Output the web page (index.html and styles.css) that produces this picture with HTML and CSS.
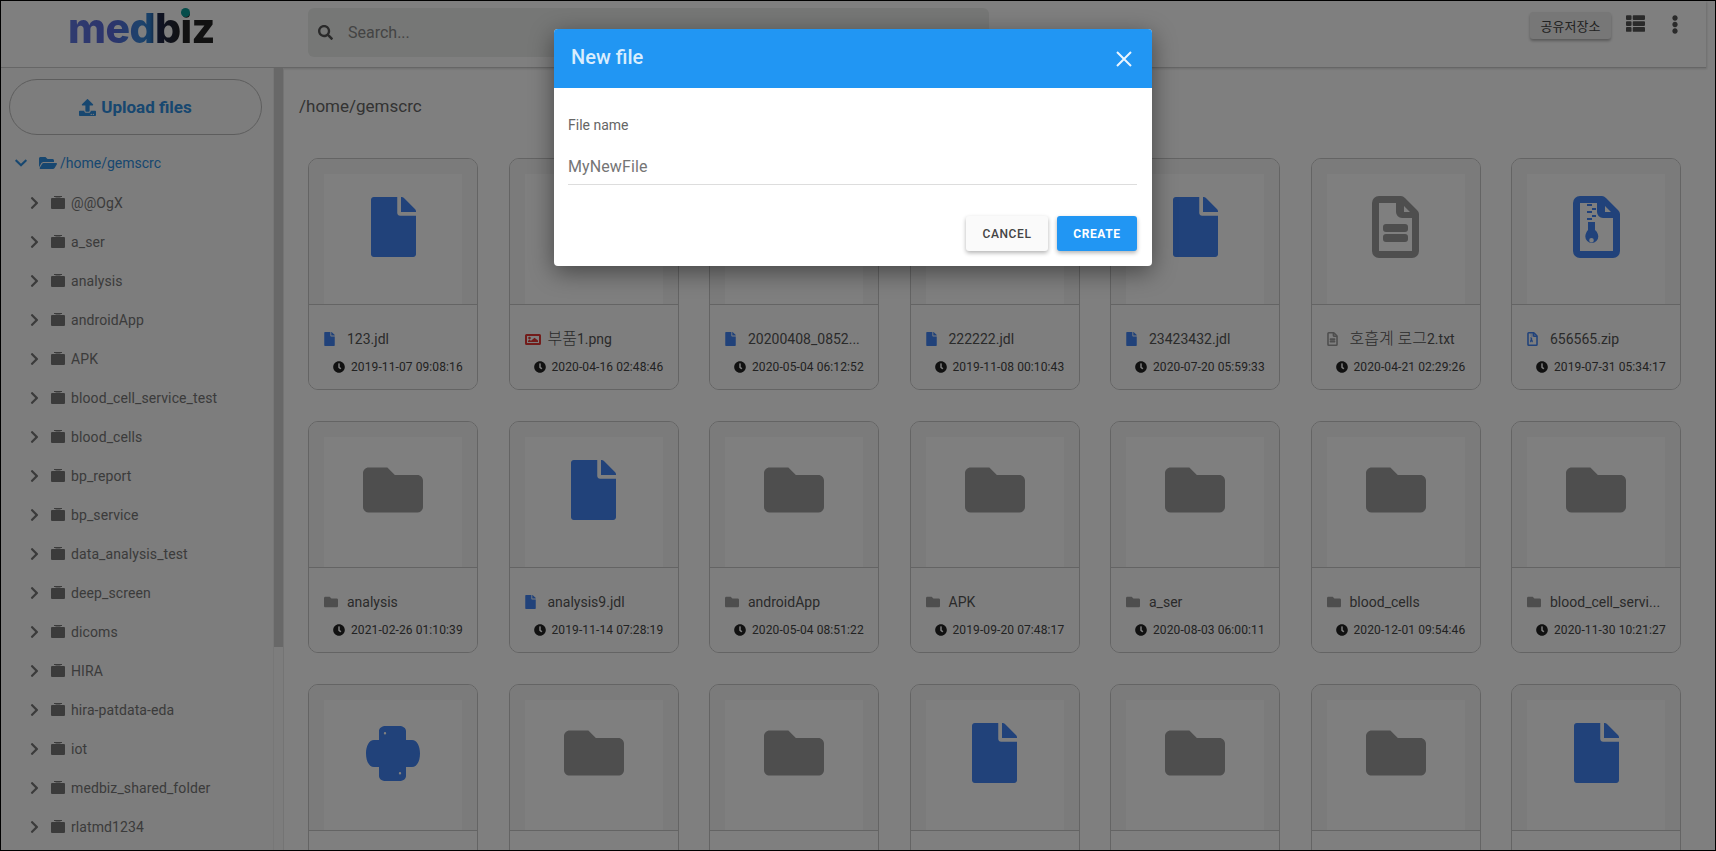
FILE: index.html

```html
<!DOCTYPE html>
<html>

<head>
    <title>medbiz - File manager</title>
    <link rel="stylesheet" href="styles.css">
</head>

<body>
    <!-- Icon sprites -->
    <svg class="sprites" xmlns="http://www.w3.org/2000/svg">
        <symbol id="i-file" viewBox="0 0 384 512"><path d="M224 136V0H24C10.7 0 0 10.7 0 24v464c0 13.3 10.7 24 24 24h336c13.3 0 24-10.7 24-24V160H248c-13.2 0-24-10.8-24-24zm160-14.1v6.1H256V0h6.1c6.4 0 12.5 2.5 17 7l97.9 98c4.5 4.5 7 10.6 7 16.9z"/></symbol>
        <symbol id="i-folder" viewBox="0 0 512 512"><path d="M464 128H272l-64-64H48C21.49 64 0 85.49 0 112v288c0 26.51 21.49 48 48 48h416c26.51 0 48-21.49 48-48V176c0-26.51-21.49-48-48-48z"/></symbol>
        <symbol id="i-folder-open" viewBox="0 0 576 512"><path d="M572.694 292.093L500.27 416.248A63.997 63.997 0 0 1 444.989 448H45.025c-18.523 0-30.064-20.093-20.731-36.093l72.424-124.155A64 64 0 0 1 152 256h399.964c18.523 0 30.064 20.093 20.73 36.093zM152 224h328v-48c0-26.51-21.49-48-48-48H272l-64-64H48C21.49 64 0 85.49 0 112v278.046l69.077-118.418C86.214 242.25 117.989 224 152 224z"/></symbol>
        <symbol id="i-tree-folder" viewBox="0 0 14 13"><path d="M3 0h8v1H3zM1 2h3l1-.5h4L10 2h3a1 1 0 0 1 1 1v9a1 1 0 0 1-1 1H1a1 1 0 0 1-1-1V3a1 1 0 0 1 1-1z"/></symbol>
        <symbol id="i-right" viewBox="0 0 320 512"><path d="M285.476 272.971L91.132 467.314c-9.373 9.373-24.569 9.373-33.941 0l-22.667-22.667c-9.357-9.357-9.375-24.522-.04-33.901L188.505 256 34.484 101.255c-9.335-9.379-9.317-24.544.04-33.901l22.667-22.667c9.373-9.373 24.569-9.373 33.941 0L285.475 239.03c9.373 9.372 9.373 24.568.001 33.941z"/></symbol>
        <symbol id="i-down" viewBox="0 0 448 512"><path d="M207.029 381.476L12.686 187.132c-9.373-9.373-9.373-24.569 0-33.941l22.667-22.667c9.357-9.357 24.522-9.375 33.901-.04L224 284.505l154.745-154.021c9.379-9.335 24.544-9.317 33.901.04l22.667 22.667c9.373 9.373 9.373 24.569 0 33.941L240.971 381.476c-9.373 9.372-24.569 9.372-33.942 0z"/></symbol>
        <symbol id="i-search" viewBox="0 0 512 512"><path d="M505 442.7L405.3 343c-4.5-4.5-10.6-7-17-7H372c27.6-35.3 44-79.7 44-128C416 93.1 322.9 0 208 0S0 93.1 0 208s93.1 208 208 208c48.3 0 92.7-16.4 128-44v16.3c0 6.4 2.5 12.5 7 17l99.7 99.7c9.4 9.4 24.6 9.4 33.9 0l28.3-28.3c9.4-9.4 9.4-24.6.1-34zM208 336c-70.7 0-128-57.2-128-128 0-70.7 57.2-128 128-128 70.7 0 128 57.2 128 128 0 70.7-57.2 128-128 128z"/></symbol>
        <symbol id="i-clock" viewBox="0 0 512 512"><path d="M256,8C119,8,8,119,8,256S119,504,256,504,504,393,504,256,393,8,256,8Zm92.49,313h0l-20,25a16,16,0,0,1-22.49,2.5h0l-67-49.72a40,40,0,0,1-15-31.23V112a16,16,0,0,1,16-16h32a16,16,0,0,1,16,16V256l58,42.5A16,16,0,0,1,348.49,321Z"/></symbol>
        <symbol id="i-dots" viewBox="0 0 192 512"><path d="M96 184c39.8 0 72 32.2 72 72s-32.2 72-72 72-72-32.2-72-72 32.2-72 72-72zM24 80c0 39.8 32.2 72 72 72s72-32.2 72-72S135.8 8 96 8 24 40.2 24 80zm0 352c0 39.8 32.2 72 72 72s72-32.2 72-72-32.2-72-72-72-72 32.2-72 72z"/></symbol>
        <symbol id="i-list" viewBox="0 0 512 512"><path d="M149.333 216v80c0 13.255-10.745 24-24 24H24c-13.255 0-24-10.745-24-24v-80c0-13.255 10.745-24 24-24h101.333c13.255 0 24 10.745 24 24zM0 376v80c0 13.255 10.745 24 24 24h101.333c13.255 0 24-10.745 24-24v-80c0-13.255-10.745-24-24-24H24c-13.255 0-24 10.745-24 24zM125.333 32H24C10.745 32 0 42.745 0 56v80c0 13.255 10.745 24 24 24h101.333c13.255 0 24-10.745 24-24V56c0-13.255-10.745-24-24-24zm80 448H488c13.255 0 24-10.745 24-24v-80c0-13.255-10.745-24-24-24H205.333c-13.255 0-24 10.745-24 24v80c0 13.255 10.745 24 24 24zm-24-424v80c0 13.255 10.745 24 24 24H488c13.255 0 24-10.745 24-24V56c0-13.255-10.745-24-24-24H205.333c-13.255 0-24 10.745-24 24zm24 264H488c13.255 0 24-10.745 24-24v-80c0-13.255-10.745-24-24-24H205.333c-13.255 0-24 10.745-24 24v80c0 13.255 10.745 24 24 24z"/></symbol>
        <symbol id="i-upload" viewBox="0 0 512 512"><path d="M296 384h-80c-13.3 0-24-10.7-24-24V192h-87.7c-17.8 0-26.7-21.5-14.1-34.1L242.3 5.7c7.5-7.5 19.8-7.5 27.3 0l152.2 152.2c12.6 12.6 3.7 34.1-14.1 34.1H320v168c0 13.3-10.7 24-24 24zm216-8v112c0 13.3-10.7 24-24 24H24c-13.3 0-24-10.7-24-24V376c0-13.3 10.7-24 24-24h136v8c0 30.9 25.1 56 56 56h80c30.9 0 56-25.1 56-56v-8h136c13.3 0 24 10.7 24 24zm-124 88c0-11-9-20-20-20s-20 9-20 20 9 20 20 20 20-9 20-20zm64 0c0-11-9-20-20-20s-20 9-20 20 9 20 20 20 20-9 20-20z"/></symbol>
        <symbol id="i-python" viewBox="0 0 54 55"><path fill-rule="evenodd" d="M20 0h13c4 0 7 2 7 5v9h6c5 0 8 6 8 13.500S51 41 46 41h-6v9c0 3-3 5-7 5H20c-4 0-7-2-7-5v-9H8c-5 0-8-6-8-13.500S3 14 8 14h5V5c0-3 3-5 7-5zm-1 6a1.200 1.200 0 1 0 0 2.400 1.200 1.200 0 0 0 0-2.400zm15 40a1.200 1.200 0 1 0 0 2.400 1.200 1.200 0 0 0 0-2.400z"/></symbol>
        <symbol id="i-text" viewBox="0 0 47 62"><path fill-rule="evenodd" d="M7 0h22q2 0 4 2l12 12q2 2 2 4v37a7 7 0 0 1-7 7H7a7 7 0 0 1-7-7V7a7 7 0 0 1 7-7zm0 7v48h33V22H30a6 6 0 0 1-6-6V7zm25 3v6h6zM14 28h19a3 3 0 0 1 3 3v2a3 3 0 0 1-3 3H14a3 3 0 0 1-3-3v-2a3 3 0 0 1 3-3zm0 10h19a3 3 0 0 1 3 3v2a3 3 0 0 1-3 3H14a3 3 0 0 1-3-3v-2a3 3 0 0 1 3-3z"/></symbol>
        <symbol id="i-zip" viewBox="0 0 47 62"><path fill-rule="evenodd" d="M7 0h22q2 0 4 2l12 12q2 2 2 4v37a7 7 0 0 1-7 7H7a7 7 0 0 1-7-7V7a7 7 0 0 1 7-7zm0 7v48h33V22H30a6 6 0 0 1-6-6V7zm25 3v6h6z"/><path d="M14 8h5v2h-5zM19 12h4v2h-4zM14 15h5v2h-5zM19 19h4v2h-4zM14 22h5v2h-5zM15 26h7v8c2 1.500 3.300 4 3.300 6.500a6.500 6.500 0 0 1-13 0c0-2.500 1.300-5 2.700-6.500zm3.500 16a2.300 2.300 0 1 0 0 4.600 2.300 2.300 0 0 0 0-4.600z" fill-rule="evenodd"/></symbol>
        <symbol id="i-image" viewBox="0 0 16 11"><path fill-rule="evenodd" d="M1.500 0h13A1.500 1.500 0 0 1 16 1.500v8a1.500 1.500 0 0 1-1.500 1.500h-13A1.500 1.500 0 0 1 0 9.500v-8A1.500 1.500 0 0 1 1.500 0zm.5 2v7h12V2zm2.500.8a1.300 1.300 0 1 1 0 2.600 1.300 1.300 0 0 1 0-2.600zM3 8V6.800l1.500-1L6 6.800l3.500-3L13 6.500V8z"/></symbol>
    </svg>

    <div class="page">
        <!-- Top bar -->
        <header class="topbar">
            <div class="logo-box">
                <div class="logo">medbiz<span class="logo-dot"></span></div>
            </div>
            <div class="search">
                <svg class="search-icon"><use href="#i-search"></use></svg>
                <input class="search-input" type="text" placeholder="Search...">
            </div>
            <div class="top-actions">
                <button class="storage-btn" type="button">공유저장소</button>
                <svg class="top-icon list-icon"><use href="#i-list"></use></svg>
                <svg class="top-icon dots-icon"><use href="#i-dots"></use></svg>
            </div>
        </header>

        <div class="content">
            <!-- Folder tree -->
            <aside class="sidebar">
                <div class="sidebar-inner">
                    <button class="upload-btn" type="button">
                        <svg class="upload-icon"><use href="#i-upload"></use></svg>Upload files
                    </button>
                    <div class="tree-root">
                        <svg class="root-chevron"><use href="#i-down"></use></svg>
                        <svg class="root-folder"><use href="#i-folder-open"></use></svg>
                        <span>/home/gemscrc</span>
                    </div>
                    <div class="tree-row"><svg class="chevron"><use href="#i-right"></use></svg><svg class="tree-folder"><use href="#i-tree-folder"></use></svg><span>@@OgX</span></div>
                    <div class="tree-row"><svg class="chevron"><use href="#i-right"></use></svg><svg class="tree-folder"><use href="#i-tree-folder"></use></svg><span>a_ser</span></div>
                    <div class="tree-row"><svg class="chevron"><use href="#i-right"></use></svg><svg class="tree-folder"><use href="#i-tree-folder"></use></svg><span>analysis</span></div>
                    <div class="tree-row"><svg class="chevron"><use href="#i-right"></use></svg><svg class="tree-folder"><use href="#i-tree-folder"></use></svg><span>androidApp</span></div>
                    <div class="tree-row"><svg class="chevron"><use href="#i-right"></use></svg><svg class="tree-folder"><use href="#i-tree-folder"></use></svg><span>APK</span></div>
                    <div class="tree-row"><svg class="chevron"><use href="#i-right"></use></svg><svg class="tree-folder"><use href="#i-tree-folder"></use></svg><span>blood_cell_service_test</span></div>
                    <div class="tree-row"><svg class="chevron"><use href="#i-right"></use></svg><svg class="tree-folder"><use href="#i-tree-folder"></use></svg><span>blood_cells</span></div>
                    <div class="tree-row"><svg class="chevron"><use href="#i-right"></use></svg><svg class="tree-folder"><use href="#i-tree-folder"></use></svg><span>bp_report</span></div>
                    <div class="tree-row"><svg class="chevron"><use href="#i-right"></use></svg><svg class="tree-folder"><use href="#i-tree-folder"></use></svg><span>bp_service</span></div>
                    <div class="tree-row"><svg class="chevron"><use href="#i-right"></use></svg><svg class="tree-folder"><use href="#i-tree-folder"></use></svg><span>data_analysis_test</span></div>
                    <div class="tree-row"><svg class="chevron"><use href="#i-right"></use></svg><svg class="tree-folder"><use href="#i-tree-folder"></use></svg><span>deep_screen</span></div>
                    <div class="tree-row"><svg class="chevron"><use href="#i-right"></use></svg><svg class="tree-folder"><use href="#i-tree-folder"></use></svg><span>dicoms</span></div>
                    <div class="tree-row"><svg class="chevron"><use href="#i-right"></use></svg><svg class="tree-folder"><use href="#i-tree-folder"></use></svg><span>HIRA</span></div>
                    <div class="tree-row"><svg class="chevron"><use href="#i-right"></use></svg><svg class="tree-folder"><use href="#i-tree-folder"></use></svg><span>hira-patdata-eda</span></div>
                    <div class="tree-row"><svg class="chevron"><use href="#i-right"></use></svg><svg class="tree-folder"><use href="#i-tree-folder"></use></svg><span>iot</span></div>
                    <div class="tree-row"><svg class="chevron"><use href="#i-right"></use></svg><svg class="tree-folder"><use href="#i-tree-folder"></use></svg><span>medbiz_shared_folder</span></div>
                    <div class="tree-row"><svg class="chevron"><use href="#i-right"></use></svg><svg class="tree-folder"><use href="#i-tree-folder"></use></svg><span>rlatmd1234</span></div>
                </div>
                <div class="scrollbar"><div class="scroll-thumb"></div></div>
            </aside>

            <!-- File grid -->
            <main class="main">
                <div class="path">/home/gemscrc</div>
                <div class="grid">
                    <div class="card">
                        <div class="thumb-wrap"><div class="thumb"><svg class="big blue file"><use href="#i-file"></use></svg></div></div>
                        <div class="caption">
                            <div class="name"><svg class="mini blue mini-file"><use href="#i-file"></use></svg><span>123.jdl</span></div>
                            <div class="date"><svg class="clock"><use href="#i-clock"></use></svg>2019-11-07 09:08:16</div>
                        </div>
                    </div>
                    <div class="card">
                        <div class="thumb-wrap"><div class="thumb"><svg class="big red pic"><use href="#i-image"></use></svg></div></div>
                        <div class="caption">
                            <div class="name"><svg class="mini red mini-image"><use href="#i-image"></use></svg><span><span class="cjk">부품</span>1.png</span></div>
                            <div class="date"><svg class="clock"><use href="#i-clock"></use></svg>2020-04-16 02:48:46</div>
                        </div>
                    </div>
                    <div class="card">
                        <div class="thumb-wrap"><div class="thumb"><svg class="big blue file"><use href="#i-file"></use></svg></div></div>
                        <div class="caption">
                            <div class="name"><svg class="mini blue mini-file"><use href="#i-file"></use></svg><span>20200408_0852...</span></div>
                            <div class="date"><svg class="clock"><use href="#i-clock"></use></svg>2020-05-04 06:12:52</div>
                        </div>
                    </div>
                    <div class="card">
                        <div class="thumb-wrap"><div class="thumb"><svg class="big blue file"><use href="#i-file"></use></svg></div></div>
                        <div class="caption">
                            <div class="name"><svg class="mini blue mini-file"><use href="#i-file"></use></svg><span>222222.jdl</span></div>
                            <div class="date"><svg class="clock"><use href="#i-clock"></use></svg>2019-11-08 00:10:43</div>
                        </div>
                    </div>
                    <div class="card">
                        <div class="thumb-wrap"><div class="thumb"><svg class="big blue file"><use href="#i-file"></use></svg></div></div>
                        <div class="caption">
                            <div class="name"><svg class="mini blue mini-file"><use href="#i-file"></use></svg><span>23423432.jdl</span></div>
                            <div class="date"><svg class="clock"><use href="#i-clock"></use></svg>2020-07-20 05:59:33</div>
                        </div>
                    </div>
                    <div class="card">
                        <div class="thumb-wrap"><div class="thumb"><svg class="big grey outline"><use href="#i-text"></use></svg></div></div>
                        <div class="caption">
                            <div class="name"><svg class="mini grey mini-file"><use href="#i-text"></use></svg><span><span class="cjk">호흡계 로그</span>2.txt</span></div>
                            <div class="date"><svg class="clock"><use href="#i-clock"></use></svg>2020-04-21 02:29:26</div>
                        </div>
                    </div>
                    <div class="card">
                        <div class="thumb-wrap"><div class="thumb"><svg class="big blue outline"><use href="#i-zip"></use></svg></div></div>
                        <div class="caption">
                            <div class="name"><svg class="mini blue mini-file"><use href="#i-zip"></use></svg><span>656565.zip</span></div>
                            <div class="date"><svg class="clock"><use href="#i-clock"></use></svg>2019-07-31 05:34:17</div>
                        </div>
                    </div>

                    <div class="card">
                        <div class="thumb-wrap"><div class="thumb"><svg class="big grey folder"><use href="#i-folder"></use></svg></div></div>
                        <div class="caption">
                            <div class="name"><svg class="mini grey mini-folder"><use href="#i-folder"></use></svg><span>analysis</span></div>
                            <div class="date"><svg class="clock"><use href="#i-clock"></use></svg>2021-02-26 01:10:39</div>
                        </div>
                    </div>
                    <div class="card">
                        <div class="thumb-wrap"><div class="thumb"><svg class="big blue file"><use href="#i-file"></use></svg></div></div>
                        <div class="caption">
                            <div class="name"><svg class="mini blue mini-file"><use href="#i-file"></use></svg><span>analysis9.jdl</span></div>
                            <div class="date"><svg class="clock"><use href="#i-clock"></use></svg>2019-11-14 07:28:19</div>
                        </div>
                    </div>
                    <div class="card">
                        <div class="thumb-wrap"><div class="thumb"><svg class="big grey folder"><use href="#i-folder"></use></svg></div></div>
                        <div class="caption">
                            <div class="name"><svg class="mini grey mini-folder"><use href="#i-folder"></use></svg><span>androidApp</span></div>
                            <div class="date"><svg class="clock"><use href="#i-clock"></use></svg>2020-05-04 08:51:22</div>
                        </div>
                    </div>
                    <div class="card">
                        <div class="thumb-wrap"><div class="thumb"><svg class="big grey folder"><use href="#i-folder"></use></svg></div></div>
                        <div class="caption">
                            <div class="name"><svg class="mini grey mini-folder"><use href="#i-folder"></use></svg><span>APK</span></div>
                            <div class="date"><svg class="clock"><use href="#i-clock"></use></svg>2019-09-20 07:48:17</div>
                        </div>
                    </div>
                    <div class="card">
                        <div class="thumb-wrap"><div class="thumb"><svg class="big grey folder"><use href="#i-folder"></use></svg></div></div>
                        <div class="caption">
                            <div class="name"><svg class="mini grey mini-folder"><use href="#i-folder"></use></svg><span>a_ser</span></div>
                            <div class="date"><svg class="clock"><use href="#i-clock"></use></svg>2020-08-03 06:00:11</div>
                        </div>
                    </div>
                    <div class="card">
                        <div class="thumb-wrap"><div class="thumb"><svg class="big grey folder"><use href="#i-folder"></use></svg></div></div>
                        <div class="caption">
                            <div class="name"><svg class="mini grey mini-folder"><use href="#i-folder"></use></svg><span>blood_cells</span></div>
                            <div class="date"><svg class="clock"><use href="#i-clock"></use></svg>2020-12-01 09:54:46</div>
                        </div>
                    </div>
                    <div class="card">
                        <div class="thumb-wrap"><div class="thumb"><svg class="big grey folder"><use href="#i-folder"></use></svg></div></div>
                        <div class="caption">
                            <div class="name"><svg class="mini grey mini-folder"><use href="#i-folder"></use></svg><span>blood_cell_servi...</span></div>
                            <div class="date"><svg class="clock"><use href="#i-clock"></use></svg>2020-11-30 10:21:27</div>
                        </div>
                    </div>

                    <!-- Third row is cut off by the window, only the thumbs show -->
                    <div class="card"><div class="thumb-wrap"><div class="thumb"><svg class="big blue python"><use href="#i-python"></use></svg></div></div></div>
                    <div class="card"><div class="thumb-wrap"><div class="thumb"><svg class="big grey folder"><use href="#i-folder"></use></svg></div></div></div>
                    <div class="card"><div class="thumb-wrap"><div class="thumb"><svg class="big grey folder"><use href="#i-folder"></use></svg></div></div></div>
                    <div class="card"><div class="thumb-wrap"><div class="thumb"><svg class="big blue file"><use href="#i-file"></use></svg></div></div></div>
                    <div class="card"><div class="thumb-wrap"><div class="thumb"><svg class="big grey folder"><use href="#i-folder"></use></svg></div></div></div>
                    <div class="card"><div class="thumb-wrap"><div class="thumb"><svg class="big grey folder"><use href="#i-folder"></use></svg></div></div></div>
                    <div class="card"><div class="thumb-wrap"><div class="thumb"><svg class="big blue file"><use href="#i-file"></use></svg></div></div></div>
                </div>
            </main>
        </div>

        <!-- New file dialog -->
        <div class="overlay"></div>
        <div class="modal">
            <div class="modal-head">
                <span class="modal-title">New file</span>
                <svg class="modal-close" viewBox="0 0 16 16"><path d="M1 1l14 14M15 1L1 15"/></svg>
            </div>
            <div class="modal-body">
                <label class="field-label" for="fileName">File name</label>
                <input class="field-input" id="fileName" type="text" placeholder="MyNewFile">
                <div class="modal-actions">
                    <button class="btn btn-cancel" type="button">CANCEL</button>
                    <button class="btn btn-create" type="button">CREATE</button>
                </div>
            </div>
        </div>
    </div>
</body>

</html>
```

FILE: styles.css

```css
/* Basic page styling */
* {
    box-sizing: border-box;
}

html,
body {
    margin: 0;
    height: 100%;
    overflow: hidden;
}

body {
    font-family: Roboto, "Noto Sans CJK KR", sans-serif;
    color: #555;
}

.sprites {
    display: none;
}

svg {
    fill: currentColor;
    flex-shrink: 0;
}

.page {
    position: relative;
    width: 1716px;
    height: 851px;
    border: 1px solid #000;
    overflow: hidden;
    background-color: #fff;
}

/* Top bar */
.topbar {
    display: flex;
    width: 1705px;
    height: 67px;
    border-bottom: 1px solid #ccc;
    box-shadow: 1px 1px 2px rgba(0, 0, 0, 0.15);
}

.logo-box {
    width: 307px;
    padding: 4px 0 0 67px;
}

.logo {
    position: relative;
    width: 146px;
    font-family: Inter, sans-serif;
    font-size: 41px;
    font-weight: 800;
    line-height: 46px;
    letter-spacing: -0.6px;
    background: linear-gradient(90deg, #5f78e0 0%, #5a68d8 30%, #3b86d8 50%, #2f7fd0 56%, #20284a 62%, #222 78%);
    -webkit-background-clip: text;
    background-clip: text;
    color: transparent;
}

.logo-dot {
    position: absolute;
    left: 113px;
    top: 3px;
    width: 9px;
    height: 9px;
    border-radius: 50%;
    background-color: #0a9a96;
}

.search {
    display: flex;
    align-items: center;
    width: 681px;
    height: 49px;
    margin-top: 7px;
    padding-left: 10px;
    border-radius: 6px;
    background-color: #ecefec;
}

.search-icon {
    width: 15px;
    height: 15px;
    color: #555;
}

.search-input {
    flex: 1;
    margin-left: 13px;
    border: none;
    outline: none;
    background: transparent;
    font-family: Roboto, sans-serif;
    font-size: 16px;
}

.search-input::placeholder {
    color: #888;
}

.top-actions {
    display: flex;
    align-items: flex-start;
    margin-left: auto;
    padding: 11px 27px 0 0;
}

.storage-btn {
    width: 81px;
    height: 27px;
    padding: 0;
    border: none;
    border-radius: 3px;
    background-color: #eee;
    color: #444;
    font-family: "Noto Sans CJK KR", sans-serif;
    font-size: 13px;
    box-shadow: 0 2px 3px rgba(0, 0, 0, 0.3);
}

.top-icon {
    color: #555;
}

.list-icon {
    width: 19px;
    height: 19px;
    margin: 2px 0 0 15px;
}

.dots-icon {
    width: 8px;
    height: 19px;
    margin: 3px 0 0 26px;
}

/* Two columns below the top bar */
.content {
    display: flex;
    height: 782px;
}

/* Sidebar */
.sidebar {
    display: flex;
    width: 283px;
    background-color: #fafafa;
}

.sidebar-inner {
    width: 272px;
    padding-top: 11px;
    overflow: hidden;
}

.upload-btn {
    display: flex;
    align-items: center;
    justify-content: center;
    width: 253px;
    height: 56px;
    margin-left: 8px;
    padding: 0;
    border: 1px solid #bbb;
    border-radius: 28px;
    background: transparent;
    color: #2f8fe0;
    font-family: Roboto, sans-serif;
    font-size: 17px;
    font-weight: 700;
}

.upload-icon {
    width: 17px;
    height: 17px;
    margin-right: 5px;
}

.tree-root {
    display: flex;
    align-items: center;
    height: 40px;
    margin-top: 8px;
    padding-left: 14px;
    color: #2f8fe0;
    font-size: 14px;
}

.root-chevron {
    width: 12px;
    height: 14px;
}

.root-folder {
    width: 18px;
    height: 16px;
    margin: 0 3px 0 12px;
}

.tree-row {
    display: flex;
    align-items: center;
    height: 39px;
    padding-left: 29px;
    color: #777;
    font-size: 14px;
    letter-spacing: 0.1px;
}

.chevron {
    width: 9px;
    height: 14px;
}

.tree-folder {
    width: 14px;
    height: 13px;
    margin: 0 6px 0 12px;
}

.scrollbar {
    width: 11px;
    border-right: 1px solid #e8e8e8;
    border-left: 1px solid #eee;
}

.scroll-thumb {
    height: 579px;
    background-color: #d0d0d0;
}

/* Main area */
.main {
    flex: 1;
    padding-top: 26px;
}

.path {
    margin-left: 15px;
    color: #666;
    font-size: 17px;
    line-height: 24px;
}

.grid {
    display: grid;
    grid-template-columns: repeat(7, 170px);
    column-gap: 30.5px;
    row-gap: 31px;
    margin: 40px 0 0 24px;
}

/* File cards */
.card {
    height: 232px;
    border: 1px solid #c8c8c8;
    border-radius: 10px;
    overflow: hidden;
}

.thumb-wrap {
    height: 146px;
    padding: 15px 15px 0;
    border-bottom: 1px solid #c8c8c8;
    background-color: #f6f6f6;
}

.thumb {
    display: flex;
    justify-content: center;
    height: 130px;
    padding-top: 23px;
    background-color: #fff;
}

.big {
    height: 60px;
}

.big.file,
.big.pic {
    width: 45px;
}

.big.folder {
    width: 60px;
}

.big.python {
    width: 54px;
    height: 55px;
    margin-top: 3px;
}

.big.outline {
    width: 47px;
    height: 62px;
    margin-top: -1px;
}

.blue {
    color: #4285f4;
}

.grey {
    color: #9c9c9c;
}

.red {
    color: #e53935;
}

.caption {
    padding: 24px 0 0 15px;
    background-color: #fdfdfd;
    height: 85px;
}

.name {
    display: flex;
    align-items: center;
    height: 20px;
    color: #555;
    font-size: 14px;
    white-space: nowrap;
}

/* Korean parts of a file name run a bit larger */
.cjk {
    font-size: 16px;
    font-weight: 300;
    line-height: 20px;
}

.mini {
    margin-right: 12px;
}

.mini-file {
    width: 11px;
    height: 14px;
}

.mini-folder {
    width: 14px;
    height: 14px;
    margin-right: 9px;
}

.mini-image {
    width: 16px;
    height: 11px;
    margin-right: 7px;
}

.date {
    display: flex;
    align-items: center;
    margin: 10px 0 0 9px;
    color: #444;
    font-size: 12px;
    line-height: 16px;
    letter-spacing: 0.1px;
}

.clock {
    width: 12px;
    height: 12px;
    margin-right: 6px;
    color: #222;
}

/* Dim layer and dialog on top of the page */
.overlay {
    position: absolute;
    inset: 0;
    background-color: rgba(0, 0, 0, 0.5);
}

.modal {
    position: absolute;
    left: 553px;
    top: 28px;
    width: 598px;
    border-radius: 4px;
    overflow: hidden;
    background-color: #fff;
    box-shadow: 0 6px 24px rgba(0, 0, 0, 0.45);
}

.modal-head {
    display: flex;
    align-items: center;
    justify-content: space-between;
    height: 59px;
    padding: 0 20px 0 17px;
    background-color: #2196f3;
    color: #d9edfd;
}

.modal-title {
    font-size: 20px;
    font-weight: 500;
    margin-top: -3px;
}

.modal-close {
    width: 16px;
    height: 16px;
    fill: none;
    stroke: #eaf5fe;
    stroke-width: 2;
}

.modal-body {
    padding: 27px 15px 15px 14px;
}

.field-label {
    display: block;
    color: #666;
    font-size: 14px;
    line-height: 20px;
}

.field-input {
    display: block;
    width: 100%;
    height: 30px;
    margin-top: 20px;
    padding: 0 0 6px;
    border: none;
    border-bottom: 1px solid #ddd;
    outline: none;
    font-family: Roboto, sans-serif;
    font-size: 16px;
    letter-spacing: 0.1px;
}

.field-input::placeholder {
    color: #757575;
}

.modal-actions {
    display: flex;
    justify-content: flex-end;
    gap: 9px;
    margin-top: 31px;
}

.btn {
    height: 35px;
    padding: 0;
    border: none;
    border-radius: 3px;
    font-family: Roboto, sans-serif;
    font-size: 12px;
    font-weight: 500;
    letter-spacing: 0.6px;
    box-shadow: 0 2px 4px rgba(0, 0, 0, 0.3);
}

.btn-cancel {
    width: 82px;
    background-color: #fafafa;
    color: #444;
}

.btn-create {
    width: 80px;
    background-color: #2196f3;
    color: #fff;
    font-weight: 700;
}
```
